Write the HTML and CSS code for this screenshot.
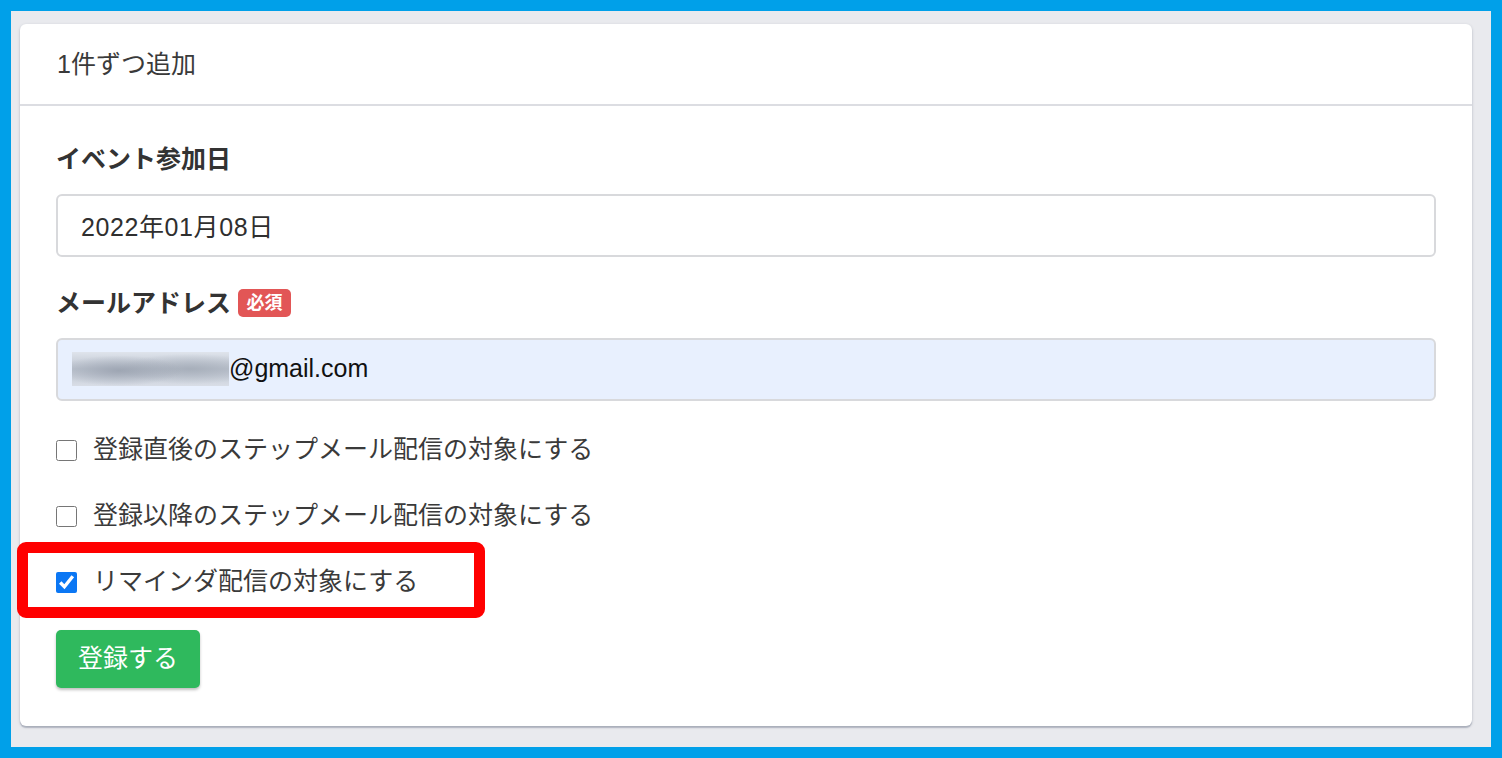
FILE: index.html
```html
<!DOCTYPE html>
<html lang="ja">
<head>
<meta charset="utf-8">
<title>1件ずつ追加</title>
<link rel="stylesheet" href="styles.css">
</head>
<body>
<div class="frame">
  <div class="page">
    <div class="card">
      <div class="card-header">1件ずつ追加</div>
      <div class="card-body">
        <div class="label">イベント参加日</div>
        <div class="form-control date">2022年01月08日</div>
        <div class="label label-mail">メールアドレス<span class="badge">必須</span></div>
        <div class="form-control autofill"><span class="blur"></span>@gmail.com</div>
        <label class="check first"><input type="checkbox"><span class="check-text">登録直後のステップメール配信の対象にする</span></label>
        <label class="check"><input type="checkbox"><span class="check-text">登録以降のステップメール配信の対象にする</span></label>
        <label class="check marked"><input type="checkbox" checked><span class="check-text">リマインダ配信の対象にする</span><span class="highlight"></span></label>
        <div class="actions"><button class="btn">登録する</button></div>
      </div>
    </div>
  </div>
</div>
</body>
</html>
```
FILE: styles.css
```css
html, body {
  margin: 0;
  padding: 0;
}
body {
  background: #00a0e9;
  font-family: "Liberation Sans", "Noto Sans CJK JP", sans-serif;
  color: #333;
}
.frame {
  padding: 11px;
  height: 758px;
  box-sizing: border-box;
}
.page {
  background: #e9eaee;
  height: 100%;
  padding: 13px 19px 0 9px;
  box-sizing: border-box;
}
.card {
  background: #fff;
  border-radius: 6px;
  box-shadow: 0 1px 3px rgba(60, 70, 90, 0.25), 0 2px 1px rgba(120, 130, 150, 0.35);
  height: 702px;
  box-sizing: border-box;
}
.card-header {
  height: 76px;
  border-bottom: 2px solid #dcdde2;
  display: flex;
  align-items: center;
  padding: 0 37px 4px;
  font-size: 25px;
  color: #3a3a3a;
}
.card-body {
  padding: 35px 36px 38px;
  display: flex;
  flex-direction: column;
}
.label {
  font-size: 25px;
  font-weight: 700;
  line-height: 36px;
  height: 36px;
  display: flex;
  align-items: center;
  margin-bottom: 17px;
}
.label-mail {
  margin-top: 28px;
}
.badge {
  display: inline-flex;
  align-items: center;
  justify-content: center;
  height: 28px;
  width: 53px;
  margin-left: 7px;
  background: #e25656;
  color: #fff;
  border-radius: 5px;
  font-size: 18px;
  font-weight: 700;
  padding-bottom: 1px;
  box-sizing: border-box;
}
.form-control {
  height: 63px;
  box-sizing: border-box;
  border: 2px solid #d8d9dc;
  border-radius: 6px;
  padding: 0 23px 2px;
  display: flex;
  align-items: center;
  font-size: 25px;
  color: #2f2f2f;
}
.date {
  letter-spacing: 0.6px;
}
.autofill {
  background: #e8f0fe;
  color: #111;
}
.blur {
  display: inline-block;
  width: 157px;
  height: 34px;
  margin-left: -9px;
  background:
    radial-gradient(ellipse 40% 45% at 30% 55%, rgba(150, 158, 172, 0.8), rgba(150, 158, 172, 0) 100%),
    radial-gradient(ellipse 45% 45% at 75% 50%, rgba(160, 168, 180, 0.75), rgba(160, 168, 180, 0) 100%),
    linear-gradient(to bottom, #dfe4ec, #bcc3ce 50%, #d9dee7);
}
.check {
  display: flex;
  align-items: center;
  height: 36px;
  margin-top: 30px;
  font-size: 25px;
  color: #3a3a3a;
  position: relative;
}
.check.first {
  margin-top: 29px;
}
.check input {
  width: 21px;
  height: 21px;
  margin: 5px 16px 0 0;
  accent-color: #0b77f4;
}
.check-text {
  padding-bottom: 3px;
}
.highlight {
  position: absolute;
  left: -39px;
  top: -20px;
  width: 468px;
  height: 76px;
  box-sizing: border-box;
  border: 11px solid #ff0000;
  border-radius: 9px;
  pointer-events: none;
}
.actions {
  margin-top: 32px;
  display: flex;
}
.btn {
  height: 58px;
  padding: 0 22px 6px;
  background: #2fb95d;
  color: #fff;
  border: none;
  border-radius: 5px;
  font-family: "Liberation Sans", "Noto Sans CJK JP", sans-serif;
  font-size: 25px;
  box-shadow: 0 2px 3px rgba(0, 0, 0, 0.25);
}
```
